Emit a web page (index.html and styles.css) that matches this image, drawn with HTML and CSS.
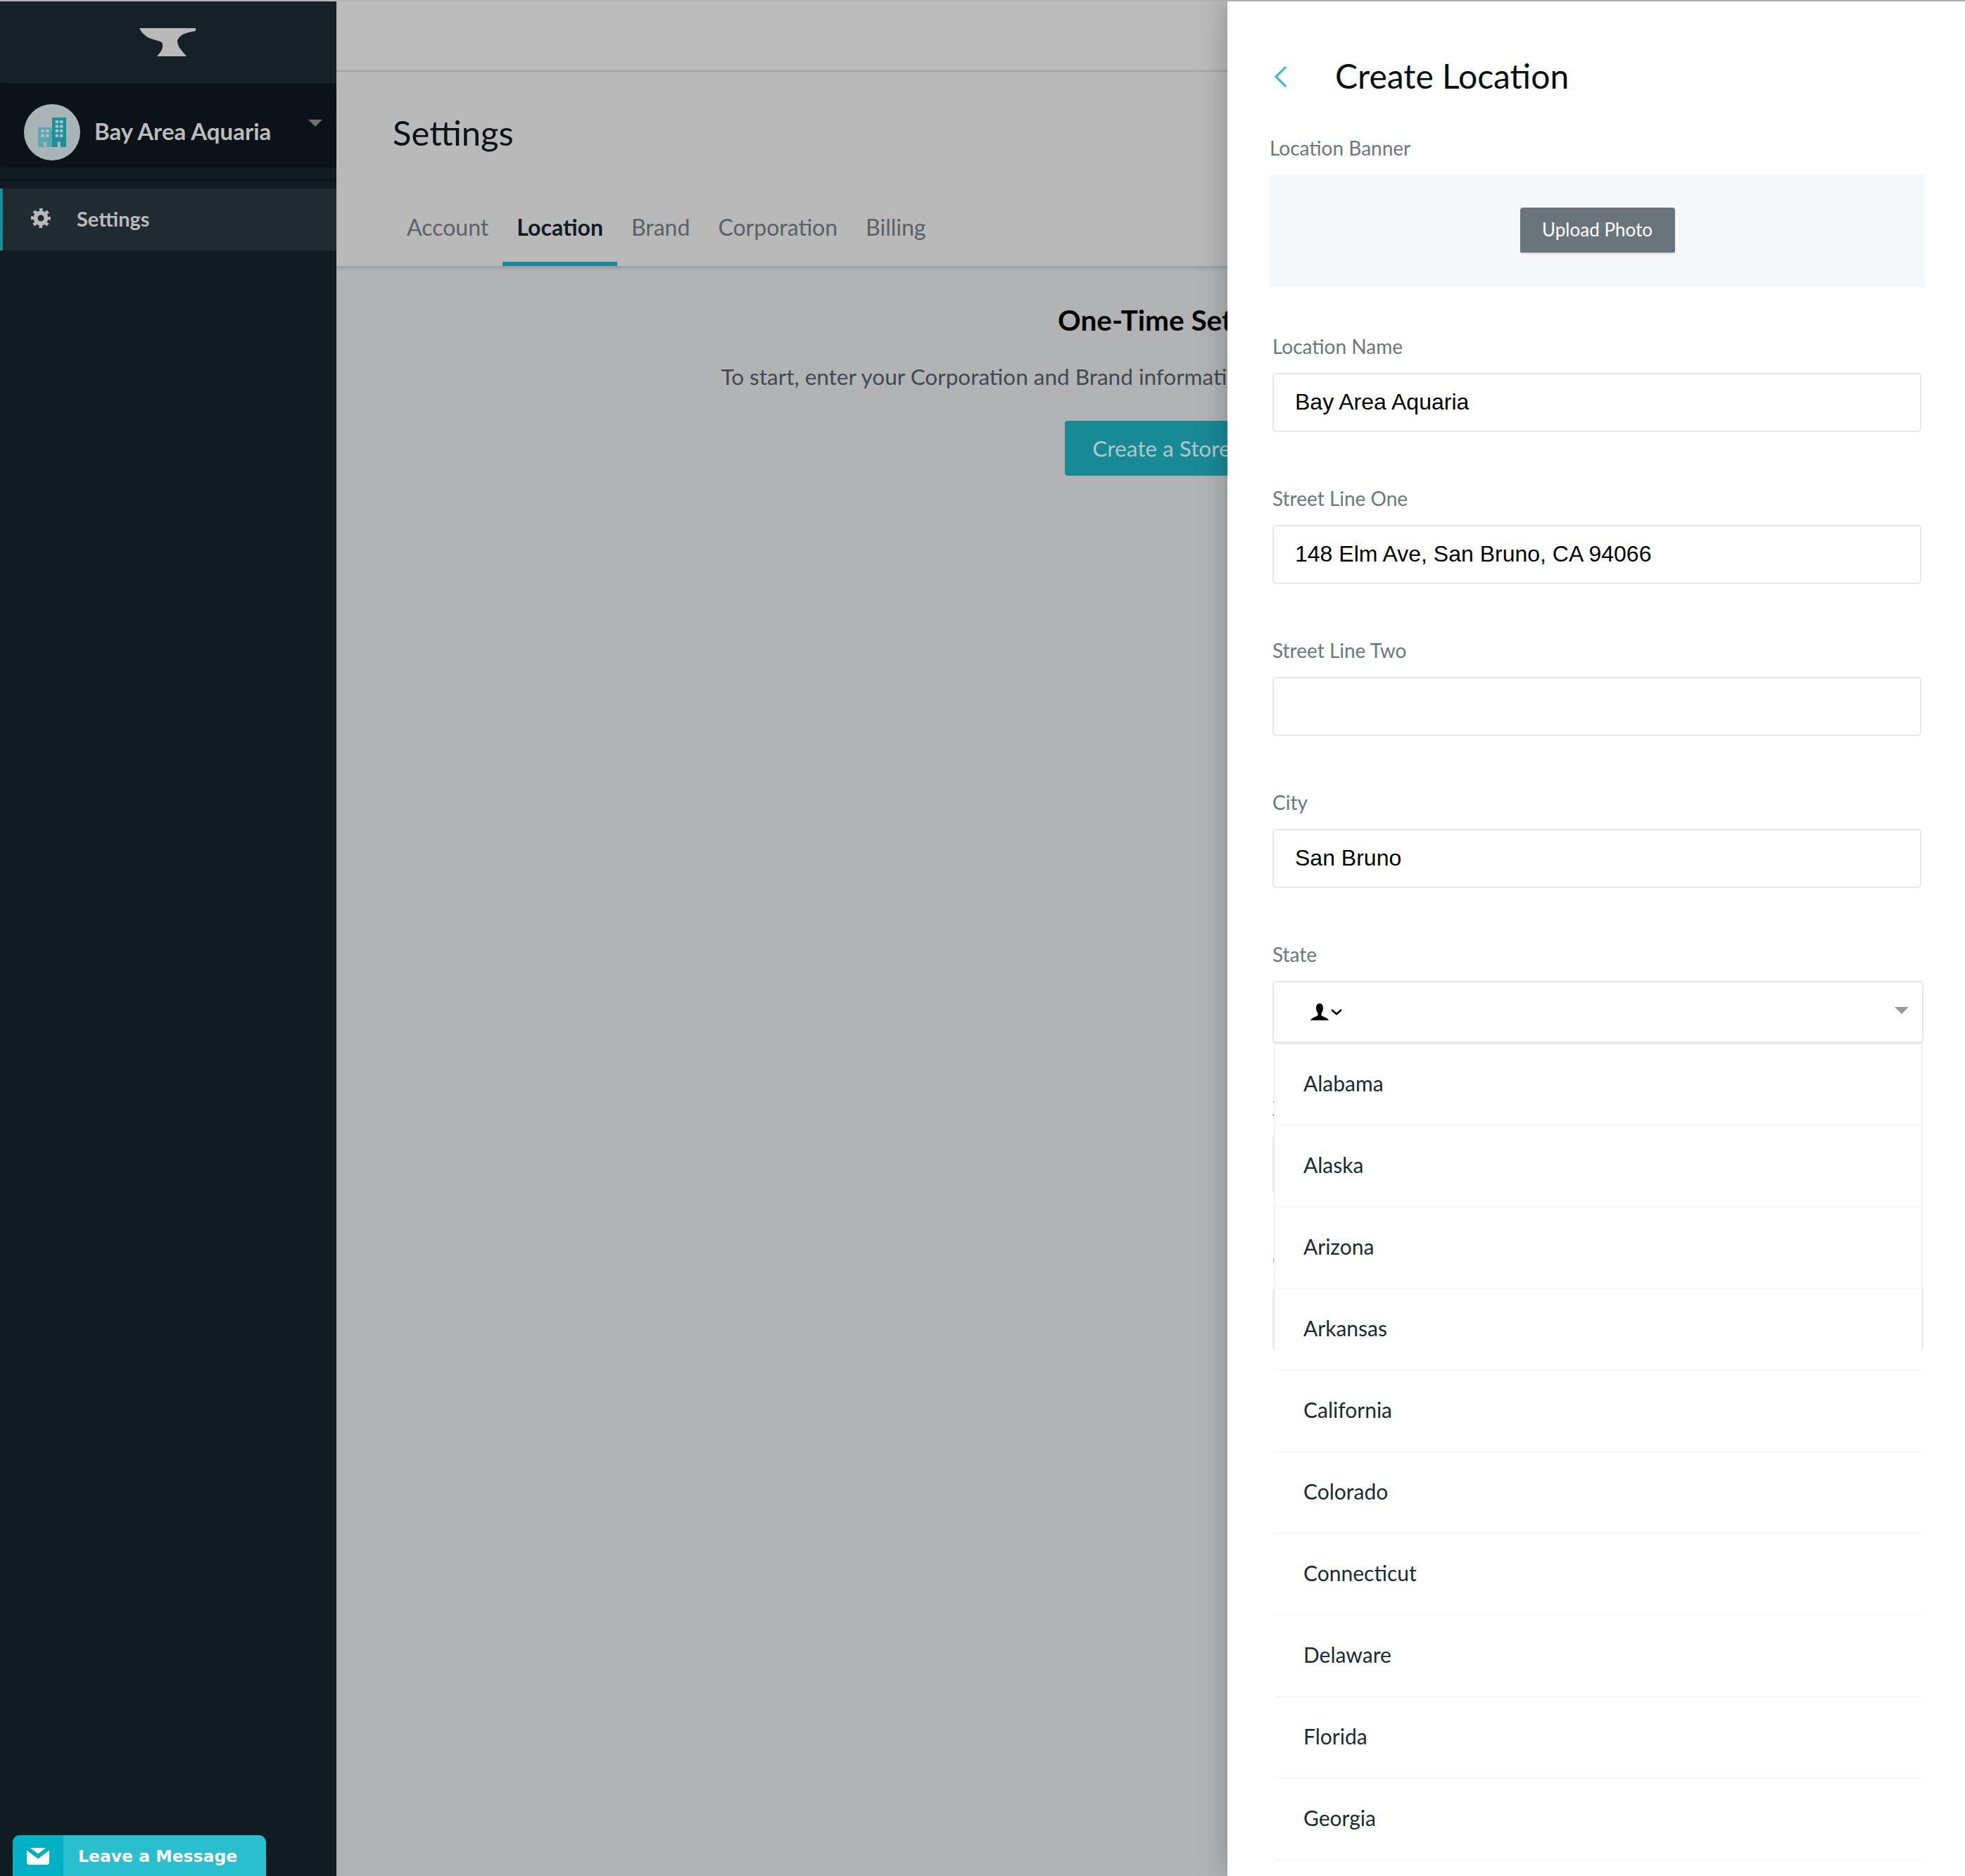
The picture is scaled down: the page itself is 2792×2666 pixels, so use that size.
FILE: index.html
```html
<!DOCTYPE html>
<html>
    <head>
        <meta charset="utf-8">
        <title>Settings - Create Location</title>
        <link rel="stylesheet" href="styles.css">
    </head>
    <body>
        <div class="app">
            <aside class="sidebar">
                <div class="logo">
                    <svg class="anvil" viewBox="0 0 80 40"><path d="M0 0H80V4C66 6 56 10 54 18C54 26 60 32 67 40H25C30 34 34 30 33 22C30 16 16 18 8 10C4 7 2 4 0 0Z"/></svg>
                </div>
                <div class="account">
                    <svg class="avatar" viewBox="0 0 80 80">
                        <circle cx="40" cy="40" r="40" fill="#a9b4b7"/>
                        <rect x="20" y="33" width="20" height="28" fill="#5aa6ae"/>
                        <rect x="40" y="19" width="20" height="42" fill="#1c8f9d"/>
                        <g fill="#a9c0c4">
                            <rect x="24.3" y="36" width="4.4" height="4.2"/><rect x="31" y="36" width="4.4" height="4.2"/>
                            <rect x="24.3" y="42.7" width="4.4" height="4.2"/><rect x="31" y="42.7" width="4.4" height="4.2"/>
                            <rect x="44.7" y="23" width="4.4" height="4.2"/><rect x="51" y="23" width="4.4" height="4.2"/>
                            <rect x="44.7" y="29.5" width="4.4" height="4.2"/><rect x="51" y="29.5" width="4.4" height="4.2"/>
                            <rect x="44.7" y="36" width="4.4" height="4.2"/><rect x="51" y="36" width="4.4" height="4.2"/>
                            <rect x="44.7" y="42.7" width="4.4" height="4.2"/><rect x="51" y="42.7" width="4.4" height="4.2"/>
                        </g>
                        <rect x="27.7" y="53.7" width="4.4" height="7.3" fill="#a9b4b7"/>
                        <rect x="47.7" y="53.7" width="4.4" height="7.3" fill="#a9b4b7"/>
                    </svg>
                    <span class="account-name">Bay Area Aquaria</span>
                    <span class="account-caret"></span>
                </div>
                <div class="divider"></div>
                <nav class="nav-item">
                    <svg class="gear" viewBox="0 0 28 28" fill="none" stroke="#b9b9b9">
                        <circle cx="14" cy="14" r="7.5" stroke-width="6"/>
                        <circle cx="14" cy="14" r="12" stroke-width="4" stroke-dasharray="4.7 4.72" stroke-dashoffset="2.35"/>
                    </svg>
                    <span>Settings</span>
                </nav>
                <div class="message-tab">
                    <span class="message-icon">
                        <svg viewBox="0 0 32 24" fill="#fff"><path d="M5 0H27L16 8.5Z"/><path d="M0 3.5L16 15.5L32 3.5V20a4 4 0 0 1-4 4H4a4 4 0 0 1-4-4Z"/></svg>
                    </span>
                    <span class="message-text">Leave a Message</span>
                </div>
            </aside>

            <main class="main">
                <div class="topbar"></div>
                <header class="page-head">
                    <h1>Settings</h1>
                    <div class="tabs">
                        <a class="tab">Account</a>
                        <a class="tab active">Location</a>
                        <a class="tab">Brand</a>
                        <a class="tab">Corporation</a>
                        <a class="tab">Billing</a>
                    </div>
                </header>
                <section class="setup">
                    <h3>One-Time Setup</h3>
                    <p>To start, enter your Corporation and Brand information to begin setting up your first stores.</p>
                    <a class="setup-btn">Create a Store</a>
                </section>
            </main>
        </div>

        <div class="panel">
            <div class="panel-head">
                <svg class="back" viewBox="0 0 19 30" fill="none" stroke="#2abfcf" stroke-width="3"><path d="M17 1L3 15L17 29"/></svg>
                <h2>Create Location</h2>
            </div>

            <label class="banner-label">Location Banner</label>
            <div class="banner"><a class="upload-btn">Upload Photo</a></div>

            <div class="field">
                <label>Location Name</label>
                <div class="input">Bay Area Aquaria</div>
            </div>
            <div class="field">
                <label>Street Line One</label>
                <div class="input">148 Elm Ave, San Bruno, CA 94066</div>
            </div>
            <div class="field">
                <label>Street Line Two</label>
                <div class="input"></div>
            </div>
            <div class="field">
                <label>City</label>
                <div class="input">San Bruno</div>
            </div>
            <div class="field state">
                <label>State</label>
                <div class="input select">
                    <svg class="flag" viewBox="0 0 46 24">
                        <path d="M13 0C9.500 0 8 3 8 7C8 10 9.500 12 10.500 14V17C8 19 2 20 0 24H26C24 20 18 19 15.500 17V14C16.500 12 18 10 18 7C18 3 16.500 0 13 0Z"/>
                        <path d="M30 9L37 15L44 9" fill="none" stroke="#000" stroke-width="2.500"/>
                    </svg>
                    <span class="select-caret"></span>
                </div>
                <div class="dropdown">
                    <div class="option">Alabama</div>
                    <div class="option">Alaska</div>
                    <div class="option">Arizona</div>
                    <div class="option">Arkansas</div>
                    <div class="option">California</div>
                    <div class="option">Colorado</div>
                    <div class="option">Connecticut</div>
                    <div class="option">Delaware</div>
                    <div class="option">Florida</div>
                    <div class="option">Georgia</div>
                </div>
            </div>
            <div class="field">
                <label>Zip Code</label>
                <div class="input"></div>
            </div>
            <div class="field">
                <label>Country</label>
                <div class="input select"></div>
            </div>
        </div>
    </body>
</html>
```

FILE: styles.css
```css
* {
    box-sizing: border-box;
}
html, body {
    margin: 0;
    padding: 0;
}
body {
    position: relative;
    width: 2792px;
    height: 2666px;
    overflow: hidden;
    background: #b5b5b5;
    font-family: "Lato", "Liberation Sans", sans-serif;
}
.app {
    display: flex;
    height: 2664px;
    margin-top: 2px;
}

/* sidebar */
.sidebar {
    position: relative;
    flex: 0 0 478px;
    background: #101c22;
}
.logo {
    display: flex;
    justify-content: center;
    height: 116px;
    padding: 38px 2px 0 0;
    background: #152127;
}
.anvil {
    width: 80px;
    height: 40px;
    fill: #b9b9b9;
}
.account {
    display: flex;
    align-items: center;
    height: 120px;
    padding: 20px 20px 0 34px;
    background: #0b1318;
    border-radius: 4px;
}
.avatar {
    width: 80px;
    height: 80px;
    margin-right: 20px;
}
.account-name {
    margin-bottom: 4px;
    font-size: 33px;
    font-weight: 700;
    color: #bcbcbc;
    white-space: nowrap;
}
.account-caret {
    margin: 0 0 26px auto;
    border-top: 10px solid #6f6f6f;
    border-left: 10px solid transparent;
    border-right: 10px solid transparent;
}
.divider {
    height: 4px;
    margin: 16px 0 10px;
    background: #0b161b;
}
.nav-item {
    display: flex;
    align-items: center;
    height: 88px;
    padding: 0 0 4px 40px;
    background: #202a31;
    border-left: 4px solid #1a8c98;
    font-size: 29px;
    font-weight: 700;
    color: #bbb;
}
.gear {
    width: 28px;
    height: 28px;
    margin-right: 37px;
}
.message-tab {
    position: absolute;
    left: 18px;
    bottom: 0;
    display: flex;
    width: 360px;
    height: 58px;
    background: #2abfcf;
    border-radius: 10px 10px 0 0;
    overflow: hidden;
}
.message-icon {
    display: flex;
    justify-content: center;
    flex: 0 0 72px;
    padding-top: 18px;
    background: #00b1c4;
}
.message-icon svg {
    width: 32px;
    height: 24px;
}
.message-text {
    padding-left: 21px;
    line-height: 60px;
    font-family: "DejaVu Sans", sans-serif;
    font-size: 23.5px;
    font-weight: 700;
    color: #fff;
}

/* page behind the panel */
.main {
    flex: 1;
    background: #b2b3b5;
}
.topbar {
    height: 100px;
    background: #bbb;
    border-bottom: 2px solid #a9a9a9;
}
.page-head {
    height: 276px;
    padding: 56px 0 0 80px;
    background: #b9b9b9;
    box-shadow: 0 2px 6px rgba(0,0,0,.18);
}
.page-head h1 {
    margin: 0 0 52px;
    font-size: 49px;
    line-height: 60px;
    font-weight: 400;
    color: #0d1114;
}
.tabs {
    display: flex;
}
.tab {
    height: 108px;
    padding: 29px 20px 0;
    font-size: 32px;
    line-height: 48px;
    color: #5b6165;
}
.tab.active {
    font-weight: 700;
    color: #101c22;
    border-bottom: 6px solid #1a8c98;
}
.setup {
    display: flex;
    flex-direction: column;
    align-items: center;
    padding: 52px 0 0 30px;
    white-space: nowrap;
}
.setup h3 {
    margin: 0 0 33px;
    font-size: 40.5px;
    line-height: 50px;
    font-weight: 700;
    color: #000;
}
.setup p {
    margin: 0 0 41px;
    font-size: 31.5px;
    line-height: 44px;
    color: #42494e;
}
.setup-btn {
    height: 78px;
    padding: 0 38px 0 39px;
    background: #188a96;
    border-radius: 4px;
    font-size: 31.5px;
    line-height: 78px;
    color: #b4c7ca;
}

/* create location panel */
.panel {
    position: absolute;
    top: 0;
    right: 0;
    width: 1048px;
    height: 2666px;
    padding: 76px 57px 0 60px;
    background: #fff;
    border-top: 2px solid #a9a9a9;
    box-shadow: 0 0 40px rgba(0,0,0,.25);
    overflow: hidden;
}
.panel-head {
    display: flex;
    align-items: center;
    height: 60px;
    margin-bottom: 55px;
    padding-left: 6px;
}
.back {
    width: 19px;
    height: 30px;
    margin: 2px 68px 0 0;
}
.panel-head h2 {
    margin: 0 0 2px;
    font-size: 48px;
    font-weight: 400;
    color: #0a0f12;
}
label {
    display: block;
    height: 34px;
    font-size: 28px;
    line-height: 34px;
    color: #6d767b;
}
.banner {
    display: flex;
    justify-content: center;
    align-items: center;
    width: 931px;
    height: 160px;
    margin: 21px 0 67px;
    background: #f6f7f9;
}
.upload-btn {
    width: 220px;
    height: 67px;
    margin-top: 1px;
    background: #6a757b;
    border-bottom: 3px solid #e4e6e8;
    border-radius: 4px;
    font-size: 26px;
    line-height: 63px;
    text-align: center;
    color: #fff;
}
.field {
    position: relative;
    margin: 0 0 77px 4px;
}
.field label {
    margin-bottom: 21px;
}
.input {
    position: relative;
    width: 922px;
    height: 84px;
    padding: 0 30px;
    background: #fff;
    border: 2px solid #e8e8e8;
    border-radius: 5px;
    font-family: "Liberation Sans", Arial, sans-serif;
    font-size: 32px;
    line-height: 78px;
    color: #000;
}
.select {
    width: 925px;
    height: 90px;
    margin-bottom: -3px;
    border-bottom-width: 4px;
}
.flag {
    display: block;
    width: 46px;
    height: 24px;
    margin: 30px 0 0 22px;
}
.select-caret {
    position: absolute;
    top: 35px;
    right: 19px;
    border-top: 10px solid #999;
    border-left: 10px solid transparent;
    border-right: 10px solid transparent;
}
.dropdown {
    position: absolute;
    z-index: 2;
    top: 145px;
    left: 2px;
    width: 922px;
    height: 438px;
    background: #fff;
    border-left: 2px solid #f4f4f4;
    border-right: 2px solid #f0f0f0;
    border-radius: 0 0 5px 5px;
}
.option {
    height: 116px;
    padding-left: 40px;
    background: #fff;
    border-bottom: 2px solid #f7f7f7;
    font-size: 30px;
    line-height: 111px;
    color: #1a2a33;
}
```
